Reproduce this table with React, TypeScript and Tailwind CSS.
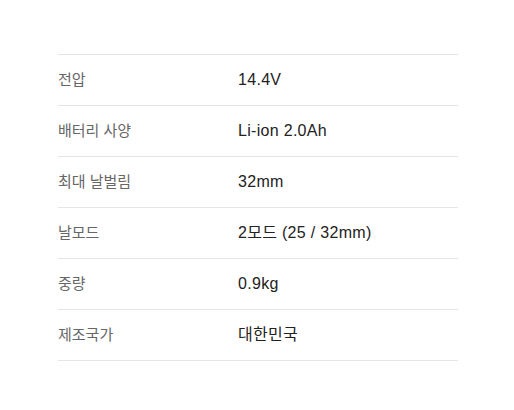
const rows: [string, string][] = [
  ["전압", "14.4V"],
  ["배터리 사양", "Li-ion 2.0Ah"],
  ["최대 날벌림", "32mm"],
  ["날모드", "2모드 (25 / 32mm)"],
  ["중량", "0.9kg"],
  ["제조국가", "대한민국"],
];

export default function App() {
  return (
    <div className="w-[514px] h-[410px] bg-white pt-[54px] pl-[58px]" style={{ fontFamily: '"Liberation Sans", "Noto Sans CJK KR", sans-serif' }}>
      <div className="w-[400px] border-t border-[#e5e5e5]">
        {rows.map(([label, value]) => (
          <div key={label} className="flex items-center h-[51px] border-b border-[#e5e5e5]">
            <div className="w-[180px] text-[15px] text-[#666]">{label}</div>
            <div className="text-[16px] text-[#222] tracking-[0.3px]">{value}</div>
          </div>
        ))}
      </div>
    </div>
  );
}
